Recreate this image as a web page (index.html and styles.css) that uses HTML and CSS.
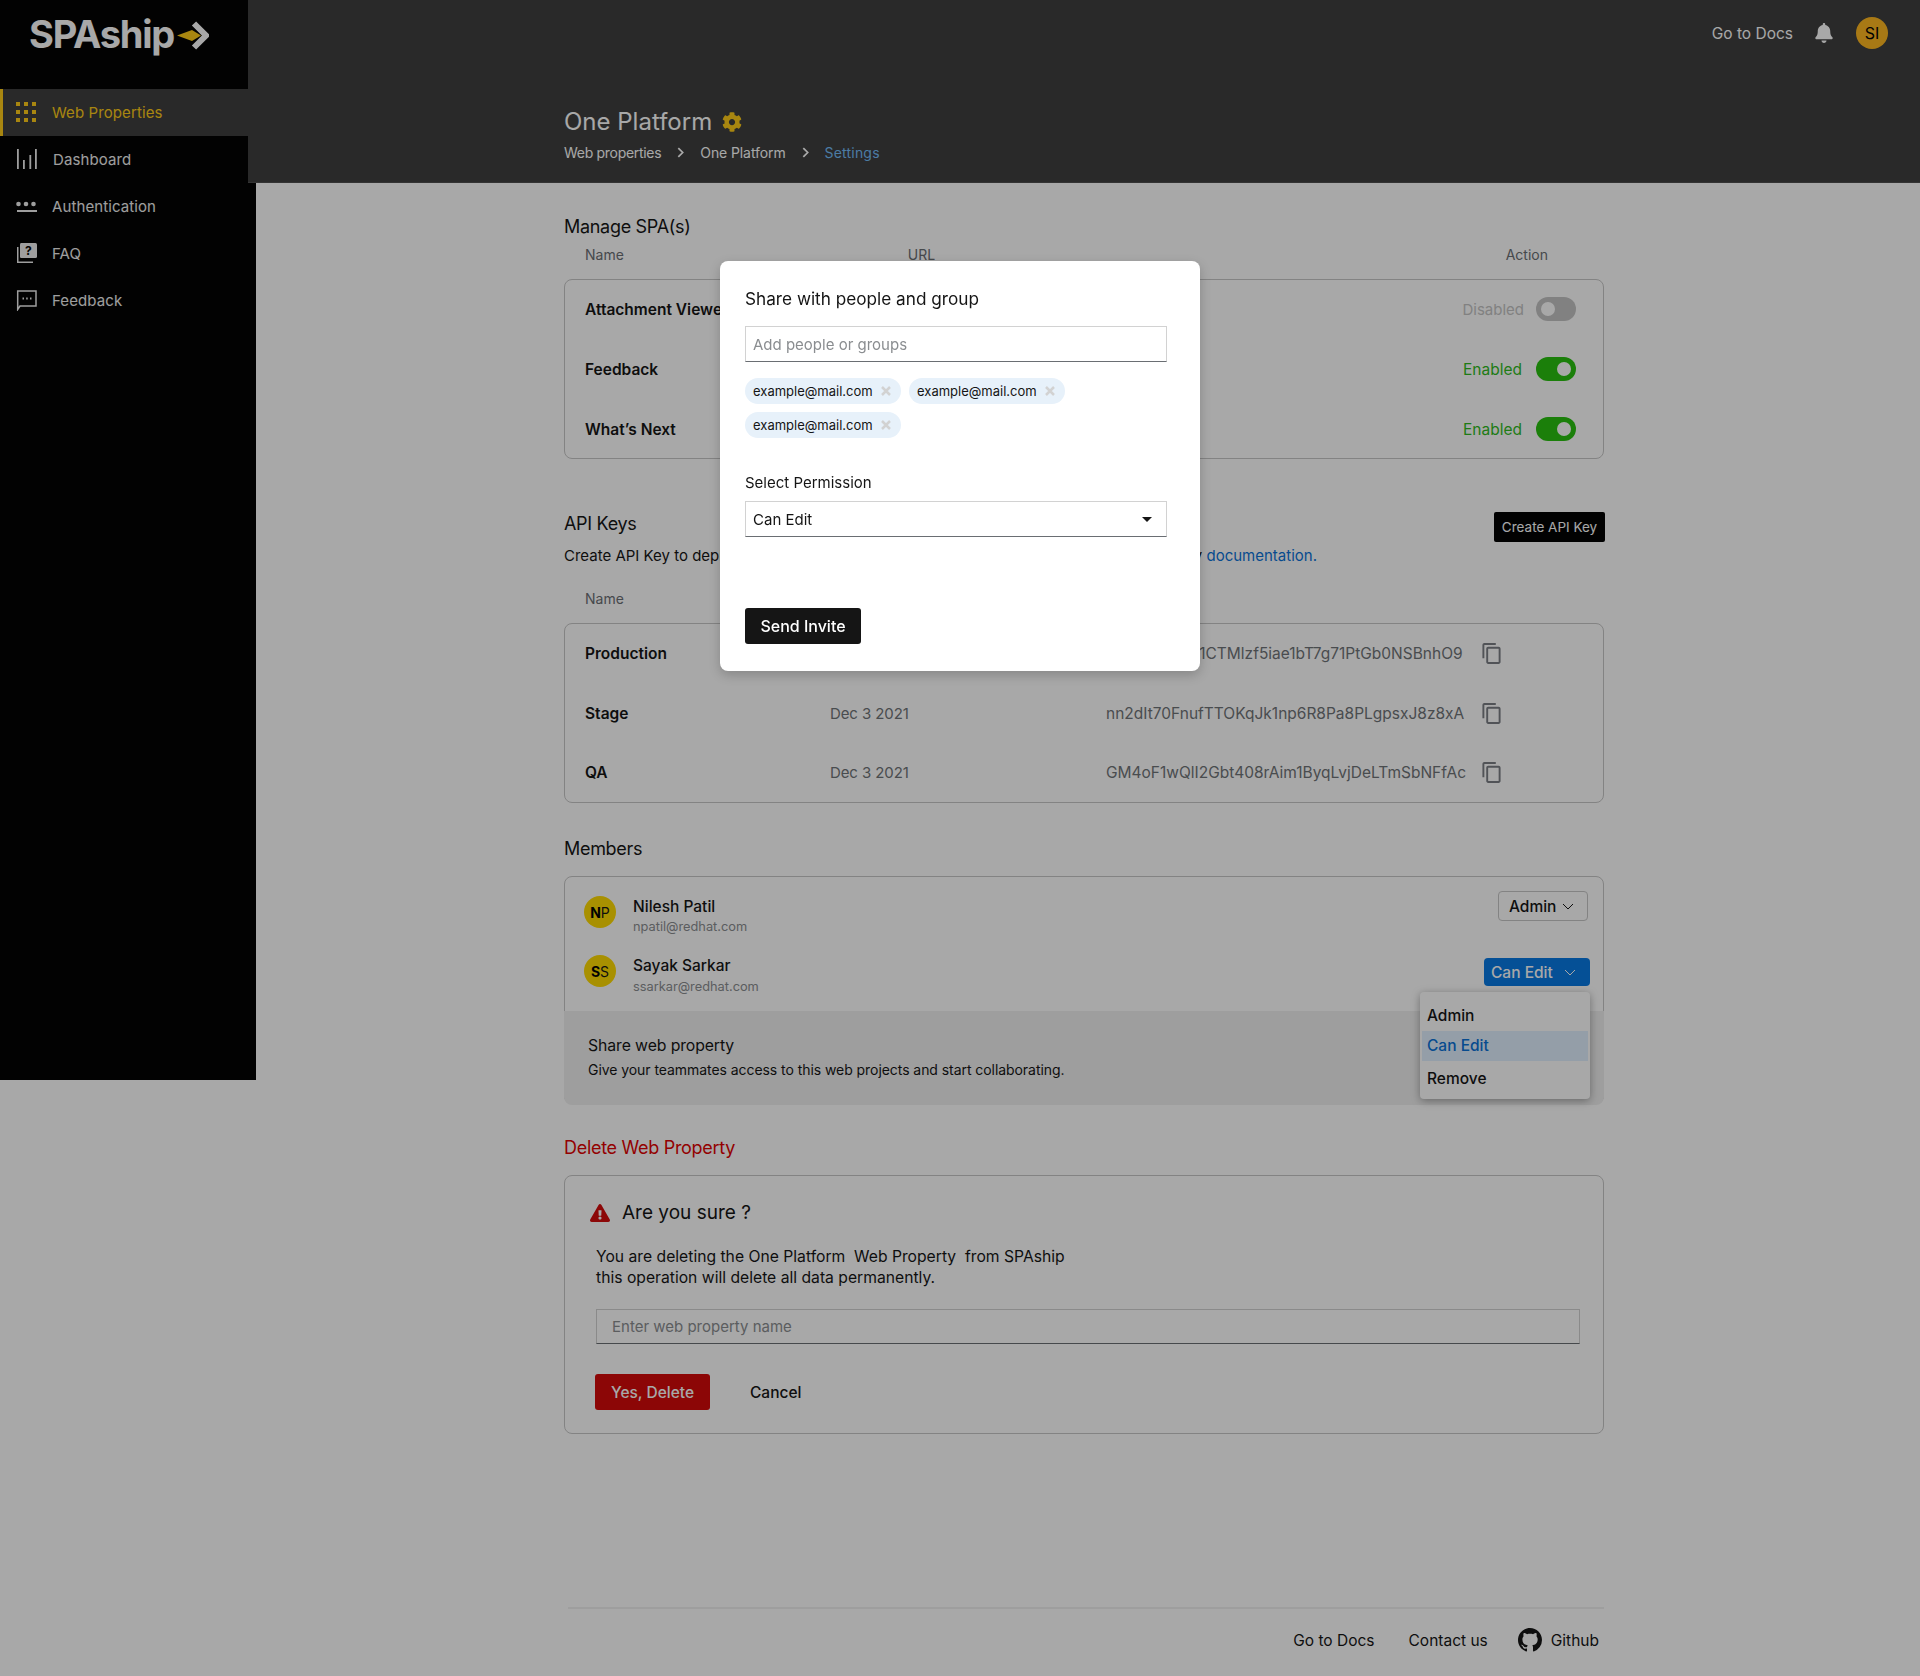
FILE: index.html
```html
<!DOCTYPE html>
<html lang="en">
<head>
    <meta charset="UTF-8">
    <meta name="viewport" content="width=device-width, initial-scale=1.0">
    <title>SPAship - One Platform Settings</title>
    <link rel="stylesheet" href="styles.css">
</head>
<body>

<div class="app">
    <aside class="sidebar">
        <div class="logo">
            <span class="logo-text">SPAship</span>
            <svg class="logo-arrow" viewBox="0 0 32 29" width="32" height="29">
                <path d="M17 2.500 29 14.500 17 26.500" fill="none" stroke="#fff" stroke-width="6"/>
                <path d="M0 14.500 15 9 24 14.500 15 20Z" fill="#ffcc17"/>
            </svg>
        </div>
        <nav class="nav">
            <a class="nav-item active">
                <svg class="nav-icon" viewBox="0 0 21 21" fill="currentColor">
                    <rect x="0" y="0" width="4" height="4"/><rect x="8" y="0" width="4" height="4"/><rect x="16" y="0" width="4" height="4"/>
                    <rect x="0" y="8" width="4" height="4"/><rect x="8" y="8" width="4" height="4"/><rect x="16" y="8" width="4" height="4"/>
                    <rect x="0" y="16" width="4" height="4"/><rect x="8" y="16" width="4" height="4"/><rect x="16" y="16" width="4" height="4"/>
                </svg>
                <span>Web Properties</span>
            </a>
            <a class="nav-item">
                <svg class="nav-icon" viewBox="0 0 21 21" fill="currentColor">
                    <rect x="1" y="0" width="1.800" height="20"/><rect x="7" y="11" width="1.800" height="9"/><rect x="13.400" y="6" width="1.800" height="14"/><rect x="19" y="0" width="1.800" height="20"/>
                </svg>
                <span class="nav-label-shift">Dashboard</span>
            </a>
            <a class="nav-item">
                <svg class="nav-icon" viewBox="0 0 21 21" fill="currentColor">
                    <circle cx="2.500" cy="8" r="2.300"/><circle cx="10" cy="8" r="2.300"/><circle cx="17.500" cy="8" r="2.300"/>
                    <rect x="1" y="14" width="20" height="2"/>
                </svg>
                <span>Authentication</span>
            </a>
            <a class="nav-item">
                <svg class="nav-icon" viewBox="0 0 21 21" fill="currentColor">
                    <path d="M5 0H19.500Q21 0 21 1.500V13.500Q21 15 19.500 15H5Q4 15 4 13.500V1.500Q4 0 5 0Z"/>
                    <path d="M1 4V20H17V18.600H2.500V4Z"/>
                    <text x="12.500" y="11.500" class="faq-mark">?</text>
                </svg>
                <span>FAQ</span>
            </a>
            <a class="nav-item">
                <svg class="nav-icon" viewBox="0 0 21 21" fill="none" stroke="currentColor" stroke-width="1.500">
                    <path d="M1.700 1H20V16H4L1.700 19.500Z"/>
                    <path d="M6.500 8.500H8M10.200 8.500H11.700M14 8.500H15.500" stroke-width="2"/>
                </svg>
                <span>Feedback</span>
            </a>
        </nav>
    </aside>

    <div class="main">
        <header class="topbar">
            <div class="topbar-actions">
                <a class="docs-link">Go to Docs</a>
                <svg class="bell" viewBox="0 0 448 512" fill="currentColor"><path d="M224 512c35.320 0 63.970-28.650 63.970-64H160.030c0 35.350 28.650 64 63.970 64zm215.390-149.710c-19.320-20.760-55.470-51.990-55.470-154.290 0-77.700-54.480-139.900-127.940-155.160V32c0-17.670-14.320-32-31.980-32s-31.980 14.330-31.980 32v20.840C118.560 68.100 64.080 130.300 64.080 208c0 102.300-36.150 133.530-55.470 154.290-6 6.450-8.660 14.160-8.610 21.710.11 16.400 12.980 32 32.100 32h383.800c19.120 0 32-15.600 32.100-32 .05-7.550-2.610-15.270-8.610-21.710z"/></svg>
                <span class="user-badge">SI</span>
            </div>
            <div class="page-head">
                <h1 class="page-title">One Platform
                    <svg class="gear" viewBox="0 0 512 512" fill="currentColor"><path d="M487.400 315.700l-42.600-24.600c4.300-23.200 4.300-47 0-70.200l42.600-24.600c4.900-2.800 7.100-8.600 5.500-14-11.100-35.600-30-67.800-54.700-94.600-3.800-4.100-10-5.100-14.800-2.300L380.800 110c-17.900-15.400-38.500-27.300-60.800-35.100V25.800c0-5.600-3.900-10.500-9.400-11.700-36.700-8.200-74.300-7.800-109.200 0-5.500 1.200-9.400 6.100-9.400 11.700V75c-22.200 7.900-42.800 19.800-60.800 35.100L88.700 85.500c-4.900-2.800-11-1.900-14.800 2.300-24.700 26.700-43.600 58.900-54.700 94.600-1.700 5.400.6 11.200 5.500 14L67.300 221c-4.300 23.200-4.300 47 0 70.200l-42.600 24.600c-4.900 2.800-7.100 8.600-5.500 14 11.100 35.600 30 67.800 54.700 94.600 3.800 4.100 10 5.100 14.800 2.300l42.600-24.600c17.900 15.400 38.500 27.300 60.800 35.100v49.200c0 5.600 3.900 10.500 9.400 11.700 36.700 8.200 74.300 7.800 109.200 0 5.500-1.200 9.400-6.100 9.400-11.700v-49.200c22.200-7.900 42.800-19.800 60.800-35.100l42.600 24.600c4.900 2.800 11 1.900 14.800-2.300 24.700-26.700 43.600-58.900 54.700-94.600 1.500-5.500-.7-11.300-5.600-14.100zM256 336c-44.100 0-80-35.900-80-80s35.900-80 80-80 80 35.900 80 80-35.900 80-80 80z"/></svg>
                </h1>
                <div class="breadcrumb">
                    <a>Web properties</a>
                    <svg class="crumb-sep" viewBox="0 0 8 12"><path d="M1.500 1 6.500 6 1.500 11" fill="none" stroke="currentColor" stroke-width="2"/></svg>
                    <a class="crumb-wide">One Platform</a>
                    <svg class="crumb-sep" viewBox="0 0 8 12"><path d="M1.500 1 6.500 6 1.500 11" fill="none" stroke="currentColor" stroke-width="2"/></svg>
                    <a class="crumb-current">Settings</a>
                </div>
            </div>
        </header>

        <main class="content">
            <section class="manage">
                <h2 class="section-title">Manage SPA(s)</h2>
                <div class="col-heads">
                    <span class="col-name">Name</span>
                    <span class="col-url">URL</span>
                    <span class="col-action">Action</span>
                </div>
                <div class="card rows-card">
                    <div class="row">
                        <span class="row-name">Attachment Viewer</span>
                        <div class="toggle-wrap off"><span>Disabled</span><span class="toggle"></span></div>
                    </div>
                    <div class="row">
                        <span class="row-name">Feedback</span>
                        <div class="toggle-wrap"><span>Enabled</span><span class="toggle"></span></div>
                    </div>
                    <div class="row">
                        <span class="row-name">What’s Next</span>
                        <div class="toggle-wrap"><span>Enabled</span><span class="toggle"></span></div>
                    </div>
                </div>
            </section>

            <section class="api-keys">
                <div class="section-bar">
                    <h2 class="section-title">API Keys</h2>
                    <button class="btn-create">Create API Key</button>
                </div>
                <p class="section-desc">Create API Key to deploy your web property using the CLI, for your details read the deploy <a>documentation.</a></p>
                <div class="col-heads"><span class="col-name">Name</span></div>
                <div class="card rows-card keys-card">
                    <div class="row">
                        <span class="row-name">Production</span>
                        <span class="row-date">Dec 3 2021</span>
                        <span class="row-key">vT2a8xk4Hq1CTMlzf5iae1bT7g71PtGb0NSBnhO9</span>
                        <svg class="copy" viewBox="2 1 19 22" fill="currentColor"><path d="M16 1H4c-1.100 0-2 .9-2 2v14h2V3h12V1zm3 4H8c-1.100 0-2 .9-2 2v14c0 1.100.9 2 2 2h11c1.100 0 2-.9 2-2V7c0-1.100-.9-2-2-2zm0 16H8V7h11v14z"/></svg>
                    </div>
                    <div class="row">
                        <span class="row-name">Stage</span>
                        <span class="row-date">Dec 3 2021</span>
                        <span class="row-key">nn2dIt70FnufTTOKqJk1np6R8Pa8PLgpsxJ8z8xA</span>
                        <svg class="copy" viewBox="2 1 19 22" fill="currentColor"><path d="M16 1H4c-1.100 0-2 .9-2 2v14h2V3h12V1zm3 4H8c-1.100 0-2 .9-2 2v14c0 1.100.9 2 2 2h11c1.100 0 2-.9 2-2V7c0-1.100-.9-2-2-2zm0 16H8V7h11v14z"/></svg>
                    </div>
                    <div class="row">
                        <span class="row-name">QA</span>
                        <span class="row-date">Dec 3 2021</span>
                        <span class="row-key">GM4oF1wQlI2Gbt408rAim1ByqLvjDeLTmSbNFfAc</span>
                        <svg class="copy" viewBox="2 1 19 22" fill="currentColor"><path d="M16 1H4c-1.100 0-2 .9-2 2v14h2V3h12V1zm3 4H8c-1.100 0-2 .9-2 2v14c0 1.100.9 2 2 2h11c1.100 0 2-.9 2-2V7c0-1.100-.9-2-2-2zm0 16H8V7h11v14z"/></svg>
                    </div>
                </div>
            </section>

            <section class="members">
                <h2 class="section-title">Members</h2>
                <div class="card members-card">
                    <div class="member-list">
                        <div class="member">
                            <span class="avatar"><b>N</b>P</span>
                            <div class="member-info">
                                <div class="member-name">Nilesh Patil</div>
                                <div class="member-mail">npatil@redhat.com</div>
                            </div>
                            <button class="role role-admin">Admin
                                <svg class="chev" viewBox="0 0 12 7"><path d="M1 1 6 6 11 1" fill="none" stroke="currentColor"/></svg>
                            </button>
                        </div>
                        <div class="member">
                            <span class="avatar"><b>S</b>S</span>
                            <div class="member-info">
                                <div class="member-name">Sayak Sarkar</div>
                                <div class="member-mail mail-low">ssarkar@redhat.com</div>
                            </div>
                            <div class="role-holder">
                                <button class="role role-open">Can Edit
                                    <svg class="chev" viewBox="0 0 12 7"><path d="M1 1 6 6 11 1" fill="none" stroke="currentColor"/></svg>
                                </button>
                                <ul class="role-menu">
                                    <li>Admin</li>
                                    <li class="selected">Can Edit</li>
                                    <li>Remove</li>
                                </ul>
                            </div>
                        </div>
                    </div>
                    <div class="share-band">
                        <div class="share-title">Share web property</div>
                        <div class="share-desc">Give your teammates access to this web projects and start collaborating.</div>
                    </div>
                </div>
            </section>

            <section class="danger">
                <h2 class="section-title danger-title">Delete Web Property</h2>
                <div class="card danger-card">
                    <div class="warn-head">
                        <svg class="warn-icon" viewBox="0 0 576 512" fill="currentColor"><path d="M569.517 440.013C587.975 472.007 564.806 512 527.940 512H48.054c-36.937 0-59.999-40.055-41.577-71.987L246.423 24.035c18.467-32.009 64.720-31.951 83.154 0l239.940 416.978zM288 354c-25.405 0-46 20.595-46 46s20.595 46 46 46 46-20.595 46-46-20.595-46-46-46zm-43.673-165.346l7.418 136c.347 6.364 5.609 11.346 11.982 11.346h48.546c6.373 0 11.635-4.982 11.982-11.346l7.418-136c.375-6.874-5.098-12.654-11.982-12.654h-63.383c-6.884 0-12.356 5.780-11.981 12.654z"/></svg>
                        <span>Are you sure ?</span>
                    </div>
                    <p class="warn-text">You are deleting the One Platform&nbsp; Web Property&nbsp; from SPAship<br>this operation will delete all data permanently.</p>
                    <input class="field field-delete" type="text" placeholder="Enter web property name">
                    <div class="danger-actions">
                        <button class="btn-delete">Yes, Delete</button>
                        <button class="btn-cancel">Cancel</button>
                    </div>
                </div>
            </section>

            <footer class="footer">
                <a>Go to Docs</a>
                <a>Contact us</a>
                <a class="github">
                    <svg class="github-icon" viewBox="0 0 16 16" fill="currentColor"><path d="M8 0C3.580 0 0 3.580 0 8c0 3.540 2.290 6.530 5.470 7.590.4.07.55-.17.55-.38 0-.19-.01-.82-.01-1.490-2.010.37-2.530-.49-2.690-.94-.09-.23-.48-.94-.82-1.130-.28-.15-.68-.52-.01-.53.63-.01 1.080.58 1.230.82.72 1.210 1.870.87 2.330.66.07-.52.28-.87.51-1.070-1.780-.2-3.640-.89-3.640-3.950 0-.87.31-1.590.82-2.150-.08-.2-.36-1.020.08-2.120 0 0 .67-.21 2.200.82.64-.18 1.320-.27 2-.27.68 0 1.360.09 2 .27 1.530-1.040 2.200-.82 2.200-.82.44 1.100.16 1.920.08 2.120.51.56.82 1.270.82 2.150 0 3.070-1.870 3.750-3.650 3.950.29.25.54.73.54 1.480 0 1.070-.01 1.930-.01 2.200 0 .21.15.46.55.38A8.013 8.013 0 0016 8c0-4.420-3.580-8-8-8z"/></svg>
                    <span>Github</span>
                </a>
            </footer>
        </main>
    </div>
</div>

<div class="backdrop">
    <div class="modal">
        <h3 class="modal-title">Share with people and group</h3>
        <input class="field" type="text" placeholder="Add people or groups">
        <div class="chips">
            <span class="chip">example@mail.com <svg class="chip-x" viewBox="0 0 10 10"><path d="M1 1 9 9M9 1 1 9" stroke="currentColor" stroke-width="2.500"/></svg></span>
            <span class="chip">example@mail.com <svg class="chip-x" viewBox="0 0 10 10"><path d="M1 1 9 9M9 1 1 9" stroke="currentColor" stroke-width="2.500"/></svg></span>
            <span class="chip">example@mail.com <svg class="chip-x" viewBox="0 0 10 10"><path d="M1 1 9 9M9 1 1 9" stroke="currentColor" stroke-width="2.500"/></svg></span>
        </div>
        <label class="modal-label">Select Permission</label>
        <div class="field select-box">
            <span>Can Edit</span>
            <span class="caret"></span>
        </div>
        <button class="btn-send">Send Invite</button>
    </div>
</div>

</body>
</html>
```

FILE: styles.css
```css
* {
    box-sizing: border-box;
}

body {
    margin: 0;
    font-family: Inter, "Noto Sans", sans-serif;
    font-size: 16px;
    color: #151515;
    background-color: #fff;
}

h1, h2, h3, p, ul {
    margin: 0;
    padding: 0;
    font-weight: 400;
}

button {
    font-family: inherit;
    border: none;
    cursor: pointer;
}

.app {
    display: flex;
    width: 1920px;
    min-height: 1676px;
}

/* sidebar */
.sidebar {
    flex: 0 0 256px;
    height: 1080px;
    background-color: #030303;
    color: #fff;
}

.logo {
    display: flex;
    height: 89px;
    padding: 12px 0 0 29px;
    gap: 3px;
}

.logo-text {
    font-size: 38px;
    font-weight: 700;
    line-height: 44px;
    letter-spacing: -1.200px;
}

.logo-arrow {
    margin-top: 9px;
}

.nav-item {
    display: flex;
    align-items: center;
    gap: 15px;
    height: 47px;
    padding-left: 16px;
    font-size: 15px;
    letter-spacing: 0.1px;
    color: #f0f0f0;
}

.nav-item.active {
    color: #ffcc17;
    background-color: #3d3d3d;
    box-shadow: inset 3px 0 0 #ffcc17;
}

.nav-icon {
    width: 21px;
    height: 21px;
}

.nav-label-shift {
    margin-left: 1px;
}

.faq-mark {
    font-size: 12px;
    font-weight: 700;
    text-anchor: middle;
    fill: #030303;
}

/* top bar */
.main {
    flex: 1;
    margin-left: -8px;
    min-width: 0;
}

.topbar {
    position: relative;
    height: 183px;
    padding-left: 316px;
    background-color: #3d3d3d;
    border-bottom: 1px solid #4f4f4f;
    color: #fff;
}

.topbar-actions {
    display: flex;
    align-items: center;
    justify-content: flex-end;
    height: 66px;
    padding-right: 32px;
    font-size: 15.500px;
}

.bell {
    width: 18px;
    height: 20px;
    margin-left: 22px;
}

.user-badge {
    display: flex;
    align-items: center;
    justify-content: center;
    width: 32px;
    height: 32px;
    margin-left: 23px;
    border-radius: 50%;
    background-color: #ffb81f;
    color: #030303;
    font-size: 16px;
}

.page-head {
    padding-top: 42px;
}

.page-title {
    display: flex;
    align-items: center;
    gap: 10px;
    font-size: 24px;
    line-height: 28px;
}

.gear {
    width: 20px;
    height: 20px;
    color: #ffcc17;
}

.breadcrumb {
    display: flex;
    align-items: center;
    height: 20px;
    margin-top: 6px;
    font-size: 14px;
    letter-spacing: -0.3px;
}

.crumb-sep {
    width: 7px;
    height: 11px;
    margin: 0 16px;
}

.crumb-wide {
    letter-spacing: -0.1px;
}

.crumb-current {
    color: #73bcf7;
    letter-spacing: 0.2px;
}

/* page content */
.content {
    width: 1356px;
    padding-left: 316px;
}

.section-title {
    font-size: 18px;
    line-height: 24px;
    letter-spacing: -0.3px;
}

.manage {
    padding-top: 32px;
}

.col-heads {
    display: flex;
    height: 18px;
    margin: 7px 0 15px;
    font-size: 14px;
    line-height: 18px;
    color: #6a6e73;
}

.col-name {
    margin-left: 21px;
}

.col-url {
    margin-left: 284px;
}

.col-action {
    margin-left: auto;
    margin-right: 56px;
}

.card {
    border: 1px solid #c7c7c7;
    border-radius: 8px;
}

.rows-card {
    display: grid;
    grid-auto-rows: 60px;
    align-content: center;
    height: 180px;
}

.keys-card {
    grid-auto-rows: 59.500px;
}

.row {
    display: flex;
    align-items: center;
    padding: 0 27px 0 20px;
    font-size: 15.500px;
}

.row-name {
    flex: 0 0 245px;
    font-weight: 600;
    white-space: nowrap;
}

.toggle-wrap {
    display: flex;
    align-items: center;
    gap: 14px;
    margin-left: auto;
    color: #2fbb1d;
}

.toggle-wrap.off {
    gap: 12px;
    font-size: 15px;
    color: #c4c4c4;
}

.toggle {
    position: relative;
    display: block;
    width: 40px;
    height: 24px;
    border-radius: 12px;
    background-color: #28c10f;
}

.toggle::after {
    content: "";
    position: absolute;
    top: 5px;
    right: 5px;
    width: 14px;
    height: 14px;
    border-radius: 50%;
    background-color: #fff;
}

.toggle-wrap.off .toggle {
    background-color: #c4c4c4;
}

.toggle-wrap.off .toggle::after {
    right: 21px;
}

.api-keys {
    padding-top: 53px;
}

.section-bar {
    display: flex;
    justify-content: space-between;
    align-items: flex-start;
    height: 30px;
}

.btn-create {
    width: 111px;
    height: 30px;
    margin-right: -1px;
    padding: 0;
    border-radius: 2px;
    background-color: #030303;
    color: #fff;
    font-size: 13.500px;
}

.section-desc {
    margin-top: 3px;
    font-size: 15px;
    line-height: 22px;
    white-space: nowrap;
}

.section-desc a {
    color: #0a72d8;
}

.section-desc + .col-heads {
    margin-top: 23px;
}

.row-date {
    flex: 0 0 276px;
    font-size: 15px;
    letter-spacing: -0.1px;
    color: #6f7377;
}

.row-key {
    flex: 0 0 376px;
    color: #6f7377;
    white-space: nowrap;
}

.copy {
    width: 19px;
    height: 21px;
    color: #7a7e84;
}

.members {
    padding-top: 34px;
}

.members .section-title,
.danger .section-title {
    margin-bottom: 15px;
}

.members-card {
    height: 228px;
}

.member-list {
    height: 134px;
    padding: 19px 13px 0 19px;
}

.member {
    display: flex;
    align-items: flex-start;
    gap: 17px;
    height: 59px;
}

.avatar {
    display: flex;
    align-items: center;
    justify-content: center;
    width: 32px;
    height: 32px;
    border-radius: 50%;
    background-color: #ffdb00;
    color: #151515;
    font-size: 14px;
}

.avatar b {
    color: #030303;
}

.member-name {
    font-size: 15.500px;
    font-weight: 500;
    line-height: 22px;
}

.member-mail {
    font-size: 12.800px;
    line-height: 18px;
    color: #8a8d90;
}

.mail-low {
    margin-top: 1px;
}

.role {
    display: flex;
    align-items: center;
    font-size: 15.500px;
    font-weight: 500;
}

.role-admin {
    justify-content: space-between;
    width: 90px;
    height: 30px;
    margin: -5px 2px 0 auto;
    padding: 0 13px 0 10px;
    background: transparent;
    color: #151515;
    border: 1px solid #c7c7c7;
    border-radius: 4px;
}

.role-holder {
    position: relative;
    margin: 3px 0 0 auto;
}

.role-open {
    justify-content: space-between;
    width: 106px;
    height: 28px;
    padding: 0 14px 0 7px;
    background-color: #0779e4;
    color: #fff;
    border-radius: 4px;
}

.chev {
    width: 12px;
    height: 7px;
}

.role-menu {
    position: absolute;
    top: 34px;
    right: 0;
    z-index: 2;
    width: 170px;
    height: 107px;
    padding: 9px 2px 0;
    list-style: none;
    background-color: #fff;
    border-radius: 4px;
    box-shadow: 0 2px 8px rgba(3, 3, 3, 0.35);
    font-size: 15.500px;
    font-weight: 500;
}

.role-menu li {
    height: 30px;
    padding-left: 5px;
    line-height: 30px;
}

.role-menu li + li + li {
    height: 34px;
    line-height: 35px;
}

.role-menu .selected {
    background-color: #e0f0ff;
    color: #0a72d8;
}

.share-band {
    height: 94px;
    margin: 0 -1px -1px;
    padding: 23px 24px 0;
    background-color: #f0f0f0;
    border-radius: 0 0 8px 8px;
}

.share-title {
    font-size: 15.800px;
    line-height: 24px;
    letter-spacing: -0.1px;
}

.share-desc {
    font-size: 14px;
    line-height: 24px;
    letter-spacing: -0.06px;
}

.danger {
    padding-top: 32px;
}

.danger-title {
    color: #e00000;
}

.danger-card {
    height: 259px;
    padding: 25px 23px 0 31px;
}

.warn-head {
    display: flex;
    align-items: center;
    gap: 12px;
    margin-left: -6px;
    font-size: 19px;
    line-height: 24px;
}

.warn-icon {
    width: 20px;
    height: 18px;
    color: #d40c0c;
}

.warn-text {
    margin-top: 21px;
    font-size: 15.700px;
    line-height: 21px;
}

.field {
    display: block;
    width: 100%;
    height: 36px;
    padding: 0 7px;
    font-family: inherit;
    font-size: 15px;
    color: #151515;
    background-color: #fff;
    border: 1px solid #d2d2d2;
    border-bottom-color: #6a6e73;
    outline: none;
}

.field::placeholder {
    color: #8a8d90;
}

.field-delete {
    height: 35px;
    margin-top: 21px;
    padding-left: 15px;
    background-color: transparent;
}

.danger-actions {
    display: flex;
    gap: 40px;
    margin: 30px 0 0 -1px;
}

.btn-delete {
    width: 115px;
    height: 36px;
    padding: 0;
    background-color: #d40808;
    color: #fff;
    border-radius: 3px;
    font-size: 15.500px;
    font-weight: 500;
}

.btn-cancel {
    padding: 0;
    background: transparent;
    color: #151515;
    font-size: 15.500px;
    font-weight: 500;
}

.footer {
    display: flex;
    justify-content: flex-end;
    align-items: center;
    gap: 34px;
    height: 68px;
    margin: 173px 0 0 4px;
    padding: 0 5px 4px 0;
    border-top: 2px solid #f0f0f0;
    font-size: 15.500px;
}

.github {
    display: flex;
    align-items: center;
    gap: 9px;
    margin-left: -4px;
}

.github-icon {
    width: 24px;
    height: 24px;
}

/* share dialog */
.backdrop {
    position: fixed;
    top: 0;
    left: 0;
    right: 0;
    bottom: 0;
    z-index: 10;
    display: flex;
    justify-content: center;
    align-items: flex-start;
    padding-top: 261px;
    background-color: rgba(3, 3, 3, 0.345);
}

.modal {
    width: 480px;
    height: 410px;
    padding: 26px 33px 0 25px;
    background-color: #fff;
    border-radius: 8px;
    box-shadow: 0 4px 12px rgba(3, 3, 3, 0.2);
}

.modal-title {
    margin-bottom: 15px;
    font-size: 17.200px;
    line-height: 24px;
}

.chips {
    display: flex;
    flex-wrap: wrap;
    gap: 8px;
    margin-top: 16px;
}

.chip {
    display: flex;
    align-items: center;
    justify-content: space-between;
    width: 156px;
    height: 26px;
    padding: 0 10px 0 8px;
    background-color: #e7f1fa;
    border-radius: 13px;
    font-size: 13px;
}

.chip-x {
    width: 10px;
    height: 10px;
    color: #d2d2d2;
}

.modal-label {
    display: block;
    margin-top: 34px;
    font-size: 15px;
    line-height: 22px;
    color: #151515;
}

.select-box {
    display: flex;
    align-items: center;
    justify-content: space-between;
    margin-top: 7px;
    padding-right: 14px;
}

.caret {
    width: 0;
    height: 0;
    border-left: 5px solid transparent;
    border-right: 5px solid transparent;
    border-top: 5px solid #151515;
}

.btn-send {
    display: block;
    width: 116px;
    height: 36px;
    margin-top: 71px;
    padding: 0;
    background-color: #151515;
    color: #fff;
    border-radius: 3px;
    font-size: 16px;
    font-weight: 500;
}
```
